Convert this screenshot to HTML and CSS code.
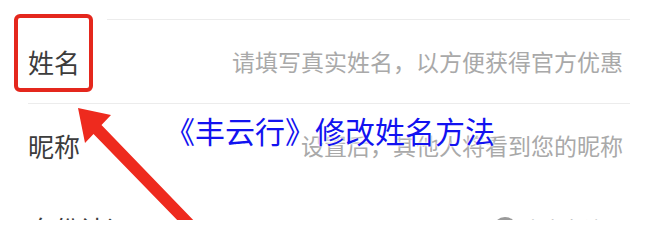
FILE: index.html
```html
<!DOCTYPE html>
<html lang="zh-CN">
<head>
<meta charset="utf-8">
<title>《丰云行》修改姓名方法</title>
<link rel="stylesheet" href="styles.css">
</head>
<body>
<div class="page">
  <div class="list">
    <div class="divider divider-short"></div>
    <div class="row">
      <span class="label">姓名</span>
      <span class="value">请填写真实姓名，以方便获得官方优惠</span>
    </div>
    <div class="divider"></div>
    <div class="row">
      <span class="label">昵称</span>
      <span class="value">设置后，其他人将看到您的昵称</span>
    </div>
    <div class="row">
      <span class="label">身份认证</span>
      <span class="value status"><span class="dot"></span>未实名认证</span>
    </div>
  </div>
  <div class="highlight"></div>
  <svg class="arrow" width="650" height="220" viewBox="0 0 650 220">
    <polygon points="78,108 111,115 101.5,125 199,226 183,226 93.5,134 85,143" fill="#ee2a1e"/>
  </svg>
  <div class="title">《丰云行》修改姓名方法</div>
</div>
</body>
</html>
```
FILE: styles.css
```css
html, body {
  margin: 0;
  padding: 0;
  background: #ffffff;
}

.page {
  position: relative;
  width: 650px;
  height: 220px;
  overflow: hidden;
  background: #ffffff;
  font-family: "Noto Sans CJK SC", "Noto Sans", sans-serif;
}

.list {
  padding: 19px 20px 0 28px;
}

.divider {
  height: 1px;
  background: #ececec;
}

.divider-short {
  margin-left: 79px;
}

.row {
  height: 83px;
  display: flex;
  align-items: center;
  justify-content: space-between;
  padding-right: 7px;
}

.label {
  font-size: 26px;
  line-height: 1;
  color: #3c3c3c;
}

.value {
  font-size: 23px;
  line-height: 1;
  color: #a9a9a9;
}

.status {
  display: flex;
  align-items: center;
  gap: 6px;
  font-size: 20px;
}

.dot {
  width: 24px;
  height: 24px;
  border-radius: 50%;
  background: #9a9a9a;
}

.highlight {
  position: absolute;
  left: 14px;
  top: 14px;
  width: 71px;
  height: 70px;
  border: 4px solid #e4271d;
  border-radius: 6px;
}

.arrow {
  position: absolute;
  left: 0;
  top: 0;
}

.title {
  position: absolute;
  left: 165px;
  top: 114px;
  font-size: 30px;
  line-height: 32px;
  color: #1212f0;
  white-space: nowrap;
  text-shadow: 0 0 2px #ffffff, 0 0 3px #ffffff, 0 0 4px #ffffff;
}
```
